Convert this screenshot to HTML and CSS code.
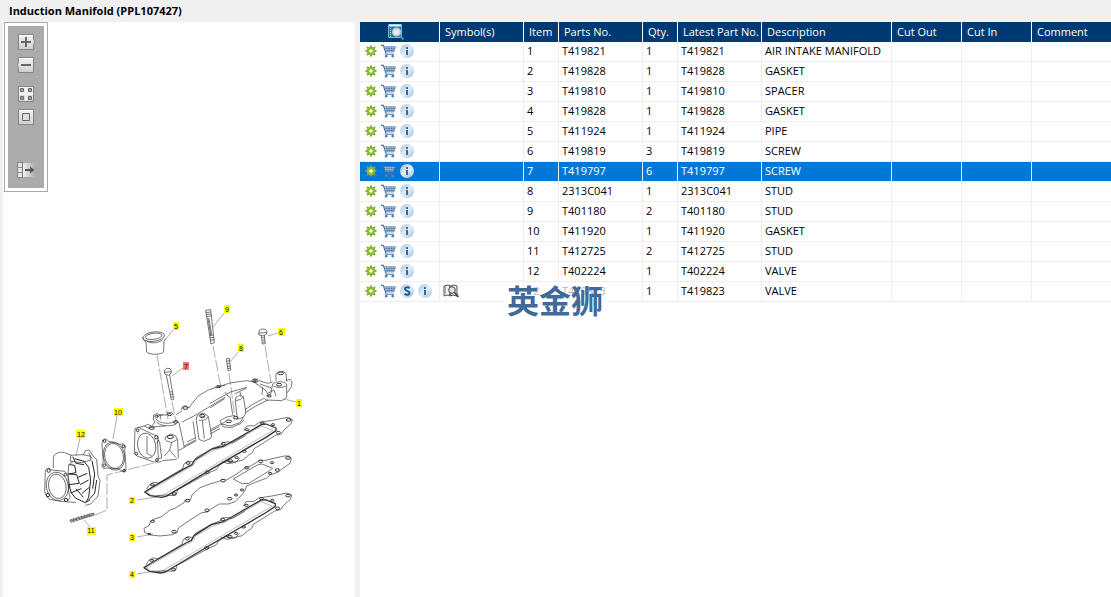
FILE: index.html
```html
<!DOCTYPE html>
<html lang="en">
<head>
    <meta charset="UTF-8">
    <meta name="viewport" content="width=device-width, initial-scale=1.0">
    <title>Induction Manifold (PPL107427)</title>
    <link rel="stylesheet" href="styles.css">
</head>
<body>

    <!-- shared icons -->
    <svg class="defs" width="0" height="0" aria-hidden="true">
        <defs>
            <linearGradient id="btn-fill" x1="0" y1="0" x2="0" y2="1">
                <stop offset="0" stop-color="#f4f4f4"/>
                <stop offset="1" stop-color="#cecece"/>
            </linearGradient>
            <linearGradient id="fade-fill" x1="0" y1="0" x2="1" y2="0">
                <stop offset="0" stop-color="#f0f0f0"/>
                <stop offset="1" stop-color="#ababab"/>
            </linearGradient>
            <linearGradient id="info-fill" x1="0" y1="0" x2="1" y2="1">
                <stop offset="0" stop-color="#a3c4e0"/>
                <stop offset="0.5" stop-color="#e2edf6"/>
                <stop offset="1" stop-color="#9dbfdd"/>
            </linearGradient>
        </defs>
        <symbol id="gear" viewBox="0 0 12 12">
            <path d="M6 .5v11M.5 6h11M2 2l8 8M10 2l-8 8" stroke="#7fb02c" stroke-width="2"/>
            <circle cx="6" cy="6" r="3" fill="none" stroke="#8cba30" stroke-width="2.400"/>
            <circle class="gear-hole" cx="6" cy="6" r="1.800"/>
        </symbol>
        <symbol id="cart" viewBox="0 0 16 14">
            <path d="M3 2.500h12l-2 5H5z" fill="#d5e2ef"/>
            <path d="M0 1h2.500l3 9.500h8.500" fill="none" stroke="#4b74a5" stroke-width="1.200"/>
            <path d="M3 2.500h12.500l-2 5.500H5M4 4.500h11M4.500 6.500h9.500M6 2.500l.8 5M8.500 2.500l.3 5M11 2.500l-.2 5M13.300 2.500l-.8 5" fill="none" stroke="#4b74a5" stroke-width=".8"/>
            <circle cx="5.500" cy="12.500" r="1.400" fill="#3e87c9"/>
            <circle cx="12.500" cy="12.500" r="1.400" fill="#3e87c9"/>
        </symbol>
        <symbol id="info" viewBox="0 0 14 14">
            <circle cx="7" cy="7" r="7" fill="url(#info-fill)"/>
            <path d="M6 3h2v2H6zM6 6h2v5H6z" fill="#336ba3"/>
        </symbol>
        <symbol id="super" viewBox="0 0 14 14">
            <circle cx="7" cy="7" r="7" fill="url(#info-fill)"/>
            <path d="M9.500 4.300C8.500 3 5 2.900 5 5s4.500 1.700 4.500 4-3.500 2.300-5 .7" fill="none" stroke="#0d6199" stroke-width="2"/>
        </symbol>
        <symbol id="book" viewBox="0 0 16 14">
            <path d="M1 2l4-1 2 1v10l-2-1-4 1zM14 2l-3-1-4 1v10l3-1 4 1z" fill="#f3f1e4" stroke="#55544c"/>
            <path d="M2.500 2v8" stroke="#aaa99e"/>
            <circle cx="9" cy="6" r="3.300" fill="#e3e8e8" stroke="#444"/>
            <path d="M11.500 8.500l4 4.500" stroke="#444" stroke-width="1.800"/>
        </symbol>
    </svg>

    <header class="title-bar">
        <h1>Induction Manifold (PPL107427)</h1>
    </header>

    <main class="workspace">
        <section class="viewer">
            <div class="toolbar-frame">
                <div class="toolbar">
                    <button type="button" aria-label="Zoom in">
                        <svg viewBox="0 0 18 16">
                            <path d="M1.500 .5h15v5l1.500 2.500-1.500 2.500v5h-15z" fill="url(#btn-fill)" stroke="#858585"/>
                            <path d="M2 1.500h14" stroke="#fff"/>
                            <path d="M4 8h10M9 3v10" stroke="#666" stroke-width="2"/>
                        </svg>
                    </button>
                    <button type="button" aria-label="Zoom out">
                        <svg viewBox="0 0 18 16">
                            <path d="M1.500 .5h15v15h-15v-5L0 8l1.500-2.500z" fill="url(#btn-fill)" stroke="#858585"/>
                            <path d="M2 1.500h14" stroke="#fff"/>
                            <path d="M4 8h10" stroke="#666" stroke-width="2"/>
                        </svg>
                    </button>
                    <button type="button" class="new-group" aria-label="Fit to window">
                        <svg viewBox="0 0 18 16">
                            <path d="M1.500 .5h15v15h-15z" fill="url(#btn-fill)" stroke="#858585"/>
                            <path d="M9 1v14M2 8h14" stroke="#f5f5f5" stroke-width="2"/>
                            <path d="M3.500 2.500h3v3h-3zM11.500 2.500h3v3h-3zM3.500 10.500h3v3h-3zM11.500 10.500h3v3h-3z" fill="#999" stroke="#707070"/>
                        </svg>
                    </button>
                    <button type="button" aria-label="Actual size">
                        <svg viewBox="0 0 18 16">
                            <path d="M1.500 .5h15v15h-15z" fill="url(#btn-fill)" stroke="#858585"/>
                            <path d="M2 1.500h14" stroke="#fff"/>
                            <path d="M5.500 4.500h7v7h-7z" fill="#ddd" stroke="#666"/>
                        </svg>
                    </button>
                    <button type="button" class="last-group" aria-label="Hide parts list">
                        <svg viewBox="0 0 18 16">
                            <path d="M.5 .5h5v5h-5zM.5 5.500h5v5h-5zM.5 10.500h5v5h-5z" fill="#e4e4e4" stroke="#858585"/>
                            <path d="M6 1h12v14H6z" fill="url(#fade-fill)"/>
                            <path d="M5.500 0v16" stroke="#777"/>
                            <path d="M8 8h6" stroke="#555" stroke-width="2"/>
                            <path d="M13 4.500l4.500 3.500-4.500 3.500z" fill="#555"/>
                        </svg>
                    </button>
                </div>
            </div>

            <svg class="diagram" viewBox="40 300 270 285" role="img" aria-label="Exploded view of the induction manifold">
                <!-- plate gasket, used for items 2 and 4 -->
                <symbol id="plate" viewBox="0 0 570 570" overflow="visible">
                    <g class="line">
                        <path d="M372 92l8-14 24-1 14-10 40-6 45-9 14 6-3 12-22 20-8 12-18 4-22 14-42 26-5 12-12 8-16 14-26 6-24-3-20 12-10 14-20 8-80 44-16 8-3 12-14 6-18-2-28 2"/>
                        <path d="M80 267l8-12 12-8 16 2 72-43 4-14 14-9 14 3 10-14 50-28 22-8 8-8 14-3 14 4 38-22"/>
                        <path d="M306 185l18 6 24-4 12-14M316 181l16 5"/>
                    </g>
                    <path class="rim" d="M74 276l22-14 104-60 16-8 8-14 52-33 36-9 20-11 92-53 14-2 30 12v8l-30 20-170 99-130 78-14 3-34-5z"/>
                    <path class="rim-inner" d="M82 275l122-70 17-10 8-14 50-29 40-13 106-61 34 13-34 20-300 177-34-3z"/>
                    <g class="bolt">
                        <ellipse cx="97" cy="254" rx="6" ry="3"/>
                        <ellipse cx="163" cy="282" rx="6" ry="4"/>
                        <ellipse cx="204" cy="189" rx="6" ry="4"/>
                        <ellipse cx="310" cy="131" rx="6" ry="4"/>
                        <ellipse cx="262" cy="217" rx="6" ry="4"/>
                        <ellipse cx="331" cy="183" rx="7" ry="4"/>
                        <ellipse cx="350" cy="173" rx="5" ry="3"/>
                        <ellipse cx="373" cy="154" rx="6" ry="3"/>
                        <ellipse cx="381" cy="89" rx="6" ry="3"/>
                        <ellipse cx="427" cy="69" rx="6" ry="3"/>
                        <ellipse cx="459" cy="74" rx="5" ry="3"/>
                        <ellipse cx="506" cy="60" rx="7" ry="4"/>
                        <ellipse cx="475" cy="98" rx="6" ry="4"/>
                    </g>
                </symbol>

                <!-- leader lines -->
                <path class="leader" d="M225 312l-12 15M174 329l-9 11M278 333l-10 3M239 351l-9 11M183 368l-11 8M296 402l-12-3M117 416l-4 23M80 438l-4 18M137 500l20-3M137 537l16-3M137 574l18-3M90 527l-6-7"/>
                <path class="leader dash" d="M157 355l11 64M213 346l8 42M265 346l6 36M229 373l6 45M172 402l4 20M95 515l12-5v-35l47-12"/>

                <!-- cap, studs and screws -->
                <g class="line" transform="translate(130 300) scale(0.3333)">
                    <ellipse cx="71" cy="110" rx="33" ry="14" transform="rotate(-8 71 110)"/>
                    <ellipse cx="71" cy="109" rx="25" ry="9" transform="rotate(-8 71 109)"/>
                    <path d="M38 113l4 8 6 5 2 30c8 9 42 9 51 0l1-31 4-9M49 122c12 10 37 8 49-3"/>
                    <path d="M227 31l15-2 11 99-10 4zM228 38l14-2M229 44l14-2M230 50l14-2M238 107l13-2M239 114l13-2M240 121l13-2"/>
                    <path d="M234 55l8 50M237 55l8 50"/>
                    <path d="M289 177l9-2 4 35-8 2zM290 184l9-2M291 192l9-2M292 200l9-2M293 206l9-2"/>
                    <path d="M387 92l8-5 11 1 5 6-2 9-10 5-12-3zM386 100l24-3M394 107l3 25 9-1-3-25M396 114l8-1M397 121l8-1M397 127l8-1"/>
                    <path d="M103 211l6-6 11 1 4 6-1 9-8 5-10-3zM102 217l22-2M109 226l15 74 7-2-12-73M121 284l9-2M120 276l8-1M122 292l8-2"/>
                </g>

                <!-- manifold, flange end -->
                <g transform="translate(125 360) scale(0.3333)">
                    <g class="line">
                        <path d="M30 206l10-4 46 22 10 3 4 10-4 14M30 206l-2 74 8 8 50 18h18l6-2M38 203l20-5 12 6 20-4 32-2"/>
                        <ellipse cx="65" cy="257" rx="27" ry="38" transform="rotate(-12 65 257)"/>
                        <path d="M66 228v52l14 8M100 240l4 6 6 48-10 2-2-48zM58 198l10-5 12 6 10-13-5-8 1-13 8-4 12 4v14M106 165h20l2-8h12l6 8"/>
                        <path d="M92 176c10 16 48 18 62 6M94 186c14 14 44 14 60 6M154 182l8 6 16 74M96 172c4-5 10-7 18-8"/>
                        <path d="M120 240l2-10 16-8 14 6 6 12 2 52-6 6-42 4M122 242l18 6 16-9M140 248l-6 22-16 18M134 270l18 22M160 272l54-30M178 258l34-18"/>
                        <path d="M154 164l18-12M168 150c3-14 16-16 24-6l8-12 20-24 30-18 35-12 15-2M172 186l42-22 86-52M204 184l8 54"/>
                        <path d="M214 182l2-14 8-6 14-2 12 10 10 58-4 8-20 8-14-6zM222 182l20-3 8-9M228 168l10 2M232 182l6 54M258 208l42-22M186 246l24-12"/>
                    </g>
                    <g class="bolt">
                        <circle cx="38" cy="211" r="4"/>
                        <circle cx="94" cy="232" r="5"/>
                        <circle cx="34" cy="281" r="4"/>
                        <circle cx="96" cy="300" r="4"/>
                        <ellipse cx="95" cy="169" rx="5" ry="3"/>
                        <ellipse cx="134" cy="164" rx="6" ry="3"/>
                        <ellipse cx="152" cy="186" rx="6" ry="4"/>
                        <ellipse cx="80" cy="204" rx="8" ry="4"/>
                        <ellipse cx="181" cy="144" rx="8" ry="4"/>
                        <ellipse cx="136" cy="231" rx="9" ry="5"/>
                        <ellipse cx="232" cy="168" rx="8" ry="5"/>
                        <ellipse cx="280" cy="80" rx="7" ry="3"/>
                    </g>
                </g>

                <!-- manifold, far end -->
                <g transform="translate(210 360) scale(0.3333)">
                    <g class="line">
                        <path d="M24 81l36-12 50-7 22 4 14 10 22 16 6 12M146 62l28 8 14-4M150 72l34 12"/>
                        <path d="M198 62v-20l6-6 16-2 8 6 2 24M188 72c8-9 34-9 42 0v40l-14 10-48-2-4-4M188 72l-6 30-14 6M190 78c8 6 30 6 38 0"/>
                        <path d="M228 62l12-4 6 8-2 14-12 18M174 100l18-10 6 18M158 82l-2 22M106 158l28-18 40-20M104 150l26-18 34-18"/>
                        <path d="M76 122l2-10 10-6 12 4 8 48-8 14-18 6zM78 122l14-4 8-8M90 96l2 12M60 110l8 54M44 96l14 16M0 130l62-34 48-14M0 144l44-28M110 84l-36 18"/>
                        <path d="M30 182l18-10 26-6M30 182l4 10 26 6 30-10 10-16M34 192l6 9 22 2 30-12 10-12M0 222l30-16M0 214l28-14"/>
                    </g>
                    <g class="bolt">
                        <ellipse cx="135" cy="62" rx="9" ry="5"/>
                        <ellipse cx="135" cy="62" rx="4" ry="2"/>
                        <ellipse cx="212" cy="40" rx="9" ry="4"/>
                        <ellipse cx="207" cy="74" rx="8" ry="4"/>
                        <ellipse cx="178" cy="108" rx="6" ry="3"/>
                        <ellipse cx="56" cy="184" rx="9" ry="4"/>
                        <ellipse cx="77" cy="173" rx="7" ry="4"/>
                    </g>
                </g>

                <!-- throttle valve, ring gasket and stud -->
                <g transform="translate(30 400) scale(0.3333)">
                    <g class="line">
                        <path d="M218 120l10-4 8 8 34 9 10-2 7 8-3 10 4 50-1 14-10 2-12-9-34-2-10 2-6-9 5-11-4-54z"/>
                        <ellipse cx="252" cy="168" rx="28" ry="38" transform="rotate(-12 252 168)"/>
                        <ellipse cx="252" cy="168" rx="32" ry="43" transform="rotate(-12 252 168)"/>
                        <path d="M46 211l10-7 10 6 38 4 10 10 2 50 4 18-8 12-16 1-36-7-10-8-6-15z"/>
                        <ellipse cx="82" cy="259" rx="26" ry="37" transform="rotate(-12 82 259)"/>
                        <ellipse cx="82" cy="259" rx="33" ry="43" transform="rotate(-12 82 259)"/>
                        <path d="M70 204v-30c2-14 16-20 34-16l20 8M112 306l26 1M122 166l34-2 24 4 3 12-28 8-34-4zM128 186l-12 8-2 34 6 34"/>
                        <path d="M160 164l6-12 12-2 14 22 8 6 4 50 6 14-6 46-22 24-16 4M176 158l10 18"/>
                    </g>
                    <path class="heavy" d="M118 194l16 2 4 22-22 4 24 2 8 26-32 4 8 24 30-12M122 276l14 18 30 14 14-8M134 176l28 8 14 18 6 38-6 52-8 14M144 232l28-12M150 254l26-14M156 280l22-18M138 266l22 26M186 182l8 40-6 44M176 300l18-20 6-40M128 170l10 20 24 4"/>
                    <path class="line" d="M120 360l70-21 3 6-70 22zM130 357l2 6M138 355l2 6M146 352l2 6M154 350l2 6M162 348l2 6M170 345l2 6M178 343l2 6M122 363l70-21"/>
                    <g class="bolt">
                        <circle cx="224" cy="123" r="4"/>
                        <circle cx="280" cy="139" r="4"/>
                        <circle cx="223" cy="196" r="4"/>
                        <circle cx="282" cy="212" r="4"/>
                        <circle cx="56" cy="212" r="5"/>
                        <circle cx="106" cy="224" r="4"/>
                        <circle cx="54" cy="285" r="5"/>
                        <circle cx="108" cy="300" r="5"/>
                    </g>
                </g>

                <!-- gaskets and spacer -->
                <g transform="translate(120 400) scale(0.3333)">
                    <use href="#plate" width="570" height="570"/>
                    <use href="#plate" x="-2" y="227" width="570" height="570"/>
                    <path class="line" d="M72 385L88 376 92 363 98 359 125 350 150 330 165 325 192 308 196 300 212 298 216 285 240 263 270 252 300 243 306 238 320 240 350 222 370 208 376 200 388 200 412 186 420 180 432 182 465 174 494 168 508 168 514 176 510 190 484 208 476 216 452 224 440 234 414 244 380 258 375 272 362 288 345 305 325 312 298 312 275 326 262 336 245 338 210 360 175 384 172 397 158 404 120 408 92 405 74 398z"/>
                    <path class="line" d="M340 237l74-43 12-2 32 13-22 15-50 30-20 1z"/>
                    <g class="bolt">
                        <ellipse cx="98" cy="364" rx="6" ry="3"/>
                        <ellipse cx="203" cy="302" rx="7" ry="4"/>
                        <ellipse cx="309" cy="242" rx="7" ry="4"/>
                        <ellipse cx="380" cy="204" rx="6" ry="3"/>
                        <ellipse cx="422" cy="184" rx="6" ry="4"/>
                        <ellipse cx="456" cy="188" rx="5" ry="3"/>
                        <ellipse cx="504" cy="174" rx="7" ry="4"/>
                        <ellipse cx="472" cy="210" rx="6" ry="4"/>
                        <ellipse cx="450" cy="220" rx="5" ry="3"/>
                        <ellipse cx="366" cy="270" rx="6" ry="3"/>
                        <ellipse cx="348" cy="285" rx="5" ry="3"/>
                        <ellipse cx="329" cy="296" rx="7" ry="4"/>
                        <ellipse cx="261" cy="331" rx="6" ry="4"/>
                        <ellipse cx="162" cy="395" rx="7" ry="4"/>
                        <ellipse cx="88" cy="402" rx="5" ry="2"/>
                    </g>
                </g>

                <!-- callouts -->
                <g class="callouts">
                    <rect x="224" y="305" width="6" height="8"/><text x="227" y="312">9</text>
                    <rect x="173" y="322" width="6" height="8"/><text x="176" y="329">5</text>
                    <rect x="278" y="328" width="7" height="8"/><text x="281" y="335">6</text>
                    <rect x="238" y="344" width="6" height="8"/><text x="241" y="351">8</text>
                    <rect class="picked" x="183" y="362" width="6" height="8"/><text x="186" y="369">7</text>
                    <rect x="296" y="399" width="6" height="8"/><text x="299" y="406">1</text>
                    <rect x="114" y="408" width="9" height="8"/><text x="118" y="415">10</text>
                    <rect x="76" y="430" width="9" height="8"/><text x="81" y="437">12</text>
                    <rect x="129" y="497" width="6" height="7"/><text x="132" y="503">2</text>
                    <rect x="87" y="527" width="9" height="8"/><text x="91" y="533">11</text>
                    <rect x="129" y="534" width="6" height="7"/><text x="132" y="540">3</text>
                    <rect x="129" y="571" width="6" height="7"/><text x="132" y="577">4</text>
                </g>
            </svg>
        </section>

        <section class="parts">
            <table>
                <colgroup>
                    <col class="col-tools"><col class="col-wide"><col class="col-narrow"><col class="col-wide"><col class="col-narrow">
                    <col class="col-wide"><col class="col-desc"><col class="col-cut"><col class="col-cut"><col>
                </colgroup>
                <thead>
                    <tr>
                        <th class="search-cell">
                            <button type="button" aria-label="Search parts">
                                <svg width="16" height="16" viewBox="0 0 16 16">
                                    <path d="M.5 .5h13v13H.5z" fill="#1676a8" stroke="#6db4d8"/>
                                    <path d="M1 1.500h12" stroke="#e6f3fa" stroke-width="2"/>
                                    <path d="M2.500 4v9" stroke="#d5eaf5" stroke-dasharray="1 1"/>
                                    <circle cx="8.500" cy="8" r="4" fill="#e4e8ea" stroke="#b5bec4" stroke-width="1.500"/>
                                    <path d="M11.500 11.500l4 4" stroke="#4a8cc4" stroke-width="2"/>
                                </svg>
                            </button>
                        </th>
                        <th>Symbol(s)</th><th>Item</th><th>Parts No.</th><th>Qty.</th><th>Latest Part No.</th>
                        <th>Description</th><th>Cut Out</th><th>Cut In</th><th>Comment</th>
                    </tr>
                </thead>
                <tbody>
                    <tr>
                        <td><div class="tools"><button type="button" aria-label="Options"><svg class="gear"><use href="#gear"/></svg></button><button type="button" aria-label="Add to cart"><svg class="cart"><use href="#cart"/></svg></button><button type="button" aria-label="Info"><svg class="info"><use href="#info"/></svg></button></div></td>
                        <td></td><td>1</td><td>T419821</td><td>1</td><td>T419821</td><td>AIR INTAKE MANIFOLD</td><td></td><td></td><td></td>
                    </tr>
                    <tr>
                        <td><div class="tools"><button type="button" aria-label="Options"><svg class="gear"><use href="#gear"/></svg></button><button type="button" aria-label="Add to cart"><svg class="cart"><use href="#cart"/></svg></button><button type="button" aria-label="Info"><svg class="info"><use href="#info"/></svg></button></div></td>
                        <td></td><td>2</td><td>T419828</td><td>1</td><td>T419828</td><td>GASKET</td><td></td><td></td><td></td>
                    </tr>
                    <tr>
                        <td><div class="tools"><button type="button" aria-label="Options"><svg class="gear"><use href="#gear"/></svg></button><button type="button" aria-label="Add to cart"><svg class="cart"><use href="#cart"/></svg></button><button type="button" aria-label="Info"><svg class="info"><use href="#info"/></svg></button></div></td>
                        <td></td><td>3</td><td>T419810</td><td>1</td><td>T419810</td><td>SPACER</td><td></td><td></td><td></td>
                    </tr>
                    <tr>
                        <td><div class="tools"><button type="button" aria-label="Options"><svg class="gear"><use href="#gear"/></svg></button><button type="button" aria-label="Add to cart"><svg class="cart"><use href="#cart"/></svg></button><button type="button" aria-label="Info"><svg class="info"><use href="#info"/></svg></button></div></td>
                        <td></td><td>4</td><td>T419828</td><td>1</td><td>T419828</td><td>GASKET</td><td></td><td></td><td></td>
                    </tr>
                    <tr>
                        <td><div class="tools"><button type="button" aria-label="Options"><svg class="gear"><use href="#gear"/></svg></button><button type="button" aria-label="Add to cart"><svg class="cart"><use href="#cart"/></svg></button><button type="button" aria-label="Info"><svg class="info"><use href="#info"/></svg></button></div></td>
                        <td></td><td>5</td><td>T411924</td><td>1</td><td>T411924</td><td>PIPE</td><td></td><td></td><td></td>
                    </tr>
                    <tr>
                        <td><div class="tools"><button type="button" aria-label="Options"><svg class="gear"><use href="#gear"/></svg></button><button type="button" aria-label="Add to cart"><svg class="cart"><use href="#cart"/></svg></button><button type="button" aria-label="Info"><svg class="info"><use href="#info"/></svg></button></div></td>
                        <td></td><td>6</td><td>T419819</td><td>3</td><td>T419819</td><td>SCREW</td><td></td><td></td><td></td>
                    </tr>
                    <tr class="selected">
                        <td><div class="tools"><button type="button" aria-label="Options"><svg class="gear"><use href="#gear"/></svg></button><button type="button" aria-label="Add to cart"><svg class="cart"><use href="#cart"/></svg></button><button type="button" aria-label="Info"><svg class="info"><use href="#info"/></svg></button></div></td>
                        <td></td><td>7</td><td>T419797</td><td>6</td><td>T419797</td><td>SCREW</td><td></td><td></td><td></td>
                    </tr>
                    <tr>
                        <td><div class="tools"><button type="button" aria-label="Options"><svg class="gear"><use href="#gear"/></svg></button><button type="button" aria-label="Add to cart"><svg class="cart"><use href="#cart"/></svg></button><button type="button" aria-label="Info"><svg class="info"><use href="#info"/></svg></button></div></td>
                        <td></td><td>8</td><td>2313C041</td><td>1</td><td>2313C041</td><td>STUD</td><td></td><td></td><td></td>
                    </tr>
                    <tr>
                        <td><div class="tools"><button type="button" aria-label="Options"><svg class="gear"><use href="#gear"/></svg></button><button type="button" aria-label="Add to cart"><svg class="cart"><use href="#cart"/></svg></button><button type="button" aria-label="Info"><svg class="info"><use href="#info"/></svg></button></div></td>
                        <td></td><td>9</td><td>T401180</td><td>2</td><td>T401180</td><td>STUD</td><td></td><td></td><td></td>
                    </tr>
                    <tr>
                        <td><div class="tools"><button type="button" aria-label="Options"><svg class="gear"><use href="#gear"/></svg></button><button type="button" aria-label="Add to cart"><svg class="cart"><use href="#cart"/></svg></button><button type="button" aria-label="Info"><svg class="info"><use href="#info"/></svg></button></div></td>
                        <td></td><td>10</td><td>T411920</td><td>1</td><td>T411920</td><td>GASKET</td><td></td><td></td><td></td>
                    </tr>
                    <tr>
                        <td><div class="tools"><button type="button" aria-label="Options"><svg class="gear"><use href="#gear"/></svg></button><button type="button" aria-label="Add to cart"><svg class="cart"><use href="#cart"/></svg></button><button type="button" aria-label="Info"><svg class="info"><use href="#info"/></svg></button></div></td>
                        <td></td><td>11</td><td>T412725</td><td>2</td><td>T412725</td><td>STUD</td><td></td><td></td><td></td>
                    </tr>
                    <tr>
                        <td><div class="tools"><button type="button" aria-label="Options"><svg class="gear"><use href="#gear"/></svg></button><button type="button" aria-label="Add to cart"><svg class="cart"><use href="#cart"/></svg></button><button type="button" aria-label="Info"><svg class="info"><use href="#info"/></svg></button></div></td>
                        <td></td><td>12</td><td>T402224</td><td>1</td><td>T402224</td><td>VALVE</td><td></td><td></td><td></td>
                    </tr>
                    <tr>
                        <td><div class="tools"><button type="button" aria-label="Options"><svg class="gear"><use href="#gear"/></svg></button><button type="button" aria-label="Add to cart"><svg class="cart"><use href="#cart"/></svg></button><button type="button" aria-label="Superseded"><svg class="info"><use href="#super"/></svg></button><button type="button" aria-label="Info"><svg class="info"><use href="#info"/></svg></button></div></td>
                        <td><button type="button" aria-label="View notes"><svg class="book"><use href="#book"/></svg></button></td><td>12</td><td>T419823</td><td>1</td><td>T419823</td><td>VALVE</td><td></td><td></td><td></td>
                    </tr>
                </tbody>
            </table>
            <div class="watermark" lang="zh">英金狮</div>
        </section>
    </main>

</body>
</html>
```

FILE: styles.css
```css
* {
    box-sizing: border-box;
}

body {
    margin: 0;
    min-height: 100vh;
    display: flex;
    flex-direction: column;
    background: #f0f0f0;
    color: #000;
    font-family: "Open Sans", "Noto Sans", sans-serif;
    font-size: 11px;
    line-height: 16px;
}

.defs {
    position: absolute;
}

button {
    display: block;
    padding: 0;
    border: none;
    background: none;
    cursor: pointer;
}

button svg {
    display: block;
}

.title-bar {
    padding: 3px 9px;
}

.title-bar h1 {
    margin: 0;
    font-size: 11px;
    line-height: 16px;
    font-weight: bold;
}

.workspace {
    flex: 1;
    display: flex;
    gap: 5px;
    padding-left: 3px;
}

/* drawing side */
.viewer {
    flex: 0 0 352px;
    background: #fff;
}

.toolbar-frame {
    width: 44px;
    margin-left: 1px;
    padding: 3px;
    border: 1px solid #ababab;
    background: #fff;
}

.toolbar {
    display: flex;
    flex-direction: column;
    align-items: center;
    gap: 7px;
    padding: 8px 0 10px;
    background: #ababab;
}

.toolbar svg {
    width: 18px;
    height: 16px;
}

.toolbar .new-group {
    margin-top: 6px;
}

.toolbar .last-group {
    margin-top: 30px;
}

.diagram {
    display: block;
    width: 270px;
    margin: 108px 0 0 37px;
}

.line,
.rim,
.rim-inner,
.heavy,
.bolt {
    fill: none;
    stroke: #333;
    stroke-width: 2;
    stroke-linejoin: round;
}

.bolt {
    stroke-width: 3;
}

.rim {
    stroke: #333;
    stroke-width: 4;
}

.rim-inner {
    stroke-width: 1;
}

.heavy {
    stroke: #222;
    stroke-width: 3;
}

.leader {
    fill: none;
    stroke: #777;
    stroke-width: 0.6;
}

.dash {
    stroke-dasharray: 12 2;
}

.callouts rect {
    fill: #ff0;
}

.callouts .picked {
    fill: #ff7070;
}

.callouts text {
    font-family: "Liberation Sans", sans-serif;
    font-size: 7px;
    text-anchor: middle;
}

/* parts list side */
.parts {
    position: relative;
    flex: 1;
    min-width: 0;
    background: #fff;
}

table {
    width: 100%;
    table-layout: fixed;
    border-collapse: separate;
    border-spacing: 0;
}

.col-tools {
    width: 80px;
}

.col-wide {
    width: 84px;
}

.col-narrow {
    width: 35px;
}

.col-desc {
    width: 130px;
}

.col-cut {
    width: 70px;
}

th,
td {
    height: 20px;
    padding: 0 0 1px 3px;
    border-right: 1px solid #eee;
    border-bottom: 1px solid #eee;
    text-align: left;
    font-weight: normal;
    white-space: nowrap;
}

th {
    padding: 0 0 0 5px;
    border-right-color: #fff;
    border-bottom: none;
    background: #003a73;
    color: #fff;
}

th:last-child,
td:last-child {
    border-right: none;
}

.search-cell {
    padding: 0 8px 0 0;
}

.search-cell button {
    margin: 0 auto;
}

.tools {
    display: flex;
    align-items: center;
    gap: 4px;
    padding-left: 2px;
}

.gear {
    width: 12px;
    height: 12px;
}

.gear-hole {
    fill: #fff;
}

.cart {
    width: 15px;
    height: 14px;
}

.info {
    width: 14px;
    height: 14px;
}

.book {
    width: 16px;
    height: 14px;
}

.selected td {
    background: #0078d7;
    color: #fff;
}

.watermark {
    position: absolute;
    top: 264px;
    left: 144px;
    padding: 0 3px;
    background: rgba(255, 255, 255, 0.7);
    color: #3f6a9b;
    font-family: "Noto Sans CJK SC", sans-serif;
    font-size: 32px;
    line-height: 26px;
    font-weight: bold;
}
```
